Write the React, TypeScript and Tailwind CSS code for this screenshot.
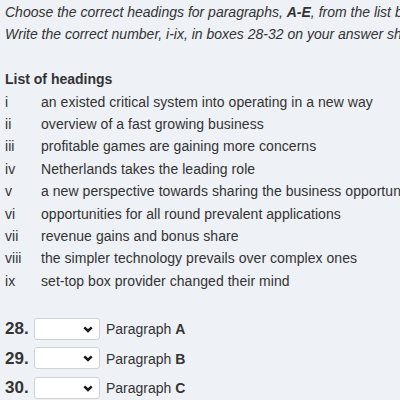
import React from "react";

const headings = [
  ["i", "an existed critical system into operating in a new way"],
  ["ii", "overview of a fast growing business"],
  ["iii", "profitable games are gaining more concerns"],
  ["iv", "Netherlands takes the leading role"],
  ["v", "a new perspective towards sharing the business opportunities"],
  ["vi", "opportunities for all round prevalent applications"],
  ["vii", "revenue gains and bonus share"],
  ["viii", "the simpler technology prevails over complex ones"],
  ["ix", "set-top box provider changed their mind"],
];

const questions = [
  ["28.", "A"],
  ["29.", "B"],
  ["30.", "C"],
  ["31.", "D"],
  ["32.", "E"],
];

function Chevron() {
  return (
    <svg width="10" height="7" viewBox="0 0 10 7" className="pointer-events-none absolute right-[7px] top-[8px]">
      <path d="M1.3 1.4 L5 5 L8.7 1.4" fill="none" stroke="#1a1a1a" strokeWidth="2.5" />
    </svg>
  );
}

export default function App() {
  return (
    <div className="w-[400px] h-[400px] overflow-hidden bg-[#eef1f5] text-[#333] font-['Liberation_Sans',Arial,sans-serif] text-[14px] leading-[22.4px] pl-[5px] pt-[1px] whitespace-nowrap">
      <p className="italic">
        Choose the correct headings for paragraphs, <b>A-E</b>, from the list below.
      </p>
      <p className="italic">Write the correct number, i-ix, in boxes 28-32 on your answer sheet.</p>
      <p className="mt-[22.4px] font-bold">List of headings</p>
      <ul className="tracking-[0.05px]">
        {headings.map(([num, text]) => (
          <li key={num} className="flex">
            <span className="w-[36px] shrink-0">{num}</span>
            <span>{text}</span>
          </li>
        ))}
      </ul>
      <div className="mt-[26px] flex flex-col gap-[7px]">
        {questions.map(([num, letter]) => (
          <div key={num} className="flex items-center h-[22.5px]">
            <span className="w-[29px] font-bold text-[17px]">{num}</span>
            <div className="relative">
              <select className="appearance-none w-[66px] h-[22px] bg-white border border-[#cfd3d8] rounded-[3px]" />
              <Chevron />
            </div>
            <span className="ml-[6px]">
              Paragraph <b>{letter}</b>
            </span>
          </div>
        ))}
      </div>
    </div>
  );
}
